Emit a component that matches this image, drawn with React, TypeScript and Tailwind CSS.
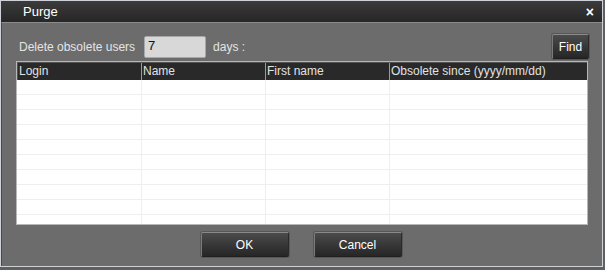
const columns = [
  { label: 'Login', w: 'w-[124px]' },
  { label: 'Name', w: 'w-[124px]' },
  { label: 'First name', w: 'w-[124px]' },
  { label: 'Obsolete since (yyyy/mm/dd)', w: 'flex-1' },
]

const rows = Array.from({ length: 10 }, (_, i) => i)

function DarkButton({ label, className }: { label: string; className: string }) {
  return (
    <button
      className={`${className} flex items-center justify-center rounded-[2px] border border-t-[#8a8a8a] border-l-[#7a7a7a] border-r-[#2a2a2a] border-b-[#1e1e1e] bg-gradient-to-b from-[#4b4b4b] to-[#262626] text-[12px] text-white shadow-[0_0_0_1px_#575757]`}
    >
      {label}
    </button>
  )
}

export default function App() {
  return (
    <div className="h-[270px] w-[605px] bg-[#5f5f5f] font-['Liberation_Sans',Arial,sans-serif]">
      <div className="flex h-[267px] w-[603px] flex-col border border-[#cfd1d9]">
        <div className="flex h-[21px] shrink-0 items-center justify-between bg-gradient-to-b from-[#3b3b3b] to-[#262626] pl-[22px] pr-[8px] text-[13px] text-white">
          <span>Purge</span>
          <span className="text-[14px] leading-none font-bold">×</span>
        </div>
        <div className="flex flex-1 flex-col border-t border-l border-t-[#8c8c8c] border-l-[#4a4a4a] bg-[#6c6c6c] px-[14px] pt-[11px]">
          <div className="flex h-[25px] items-center text-[12px] text-[#e4e4e4]">
            <span className="ml-[3px]">Delete obsolete users</span>
            <div className="ml-[9px] h-[22px] w-[62px] rounded-[2px] border border-[#a8a8a8] bg-[#d8d8d8] pl-[3px] pt-[1px] text-[13px] leading-[16px] text-[#111]">
              7
            </div>
            <span className="ml-[7px]">days :</span>
            <DarkButton label="Find" className="ml-auto mr-[-1px] h-[25px] w-[37px]" />
          </div>
          <div className="mt-[2px] flex h-[164px] flex-col overflow-hidden border border-[#b8b8b8] bg-white">
            <div className="flex h-[18px] shrink-0 border-t border-l border-[#525252] bg-[#292929] text-[12px] leading-[17px] text-[#e2e2e2]">
              {columns.map((c, i) => (
                <div
                  key={c.label}
                  className={`${c.w} truncate pl-[1px] ${i < columns.length - 1 ? 'border-r border-[#9a9a9a]' : ''}`}
                >
                  {c.label}
                </div>
              ))}
            </div>
            {rows.map((r) => (
              <div key={r} className="flex h-[15px] shrink-0 border-b border-[#efefef] pl-[1px]">
                {columns.map((c, i) => (
                  <div key={c.label} className={`${c.w} ${i < columns.length - 1 ? 'border-r border-[#eeeeee]' : ''}`} />
                ))}
              </div>
            ))}
          </div>
          <div className="mt-[7px] flex justify-center gap-[25px] pr-[2px]">
            <DarkButton label="OK" className="h-[25px] w-[88px]" />
            <DarkButton label="Cancel" className="h-[25px] w-[88px]" />
          </div>
        </div>
      </div>
    </div>
  )
}
